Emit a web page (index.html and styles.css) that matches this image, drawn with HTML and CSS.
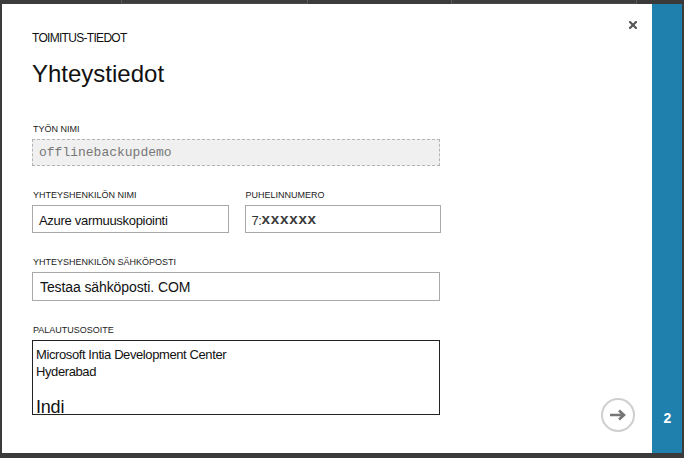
FILE: index.html
```html
<!DOCTYPE html>
<html lang="fi">
<head>
<meta charset="utf-8">
<title>Yhteystiedot</title>
<link rel="stylesheet" href="styles.css">
</head>
<body>
<div class="frame">
  <div class="topbar">
    <div class="seg seg-a"></div>
    <div class="seg seg-b"></div>
    <div class="seg seg-c"></div>
    <div class="seg seg-d"></div>
    <div class="seg seg-e"></div>
  </div>
  <div class="main">
    <div class="dialog">
      <button class="close" aria-label="Sulje">
        <svg width="8" height="8" viewBox="0 0 8 8"><path d="M1 1L7 7M7 1L1 7" stroke="#555" stroke-width="2.2" stroke-linecap="square"/></svg>
      </button>
      <div class="subtitle">TOIMITUS-TIEDOT</div>
      <h1 class="title">Yhteystiedot</h1>

      <div class="field field-first">
        <div class="label">TYÖN NIMI</div>
        <div class="input input-disabled">offlinebackupdemo</div>
      </div>

      <div class="row">
        <div class="field half">
          <div class="label">YHTEYSHENKILÖN NIMI</div>
          <div class="input input-mid">Azure varmuuskopiointi</div>
        </div>
        <div class="field half">
          <div class="label">PUHELINNUMERO</div>
          <div class="input input-mid"><span class="phone-prefix">7:</span><span class="mono">xxxxxx</span></div>
        </div>
      </div>

      <div class="field">
        <div class="label">YHTEYSHENKILÖN SÄHKÖPOSTI</div>
        <div class="input input-large">Testaa sähköposti. COM</div>
      </div>

      <div class="field">
        <div class="label">PALAUTUSOSOITE</div>
        <div class="textarea">
          <div class="addr">Microsoft Intia Development Center</div>
          <div class="addr">Hyderabad</div>
          <div class="addr-big">Indi</div>
        </div>
      </div>

      <button class="next" aria-label="Seuraava">
        <svg width="18" height="12" viewBox="0 0 18 12"><path d="M1 6H15M10 1.5L15 6L10 10.5" fill="none" stroke="#767676" stroke-width="2.6"/></svg>
      </button>
    </div>
    <div class="steps">
      <div class="step-num">2</div>
    </div>
  </div>
</div>
</body>
</html>
```

FILE: styles.css
```css
* { box-sizing: border-box; }
html, body { margin: 0; padding: 0; }
body {
  width: 684px;
  height: 458px;
  background: #3b3b3b;
  font-family: "Liberation Sans", Arial, sans-serif;
  overflow: hidden;
}
.frame {
  display: flex;
  flex-direction: column;
  height: 458px;
  padding: 0 2px 5px 2px;
}
.topbar {
  height: 4px;
  display: flex;
  margin: 0 -2px;
}
.seg { height: 4px; background: #3c3c3c; }
.seg-a { width: 121px; }
.seg-b { width: 187px; border-left: 1px solid #5a5a5a; border-right: 1px solid #5a5a5a; border-bottom: 1px solid #4a4a4a; }
.seg-c { width: 143px; }
.seg-d { width: 186px; border-left: 1px solid #5a5a5a; border-right: 1px solid #5a5a5a; border-bottom: 1px solid #4a4a4a; }
.seg-e { flex: 1; background: #3a3a3a; }
.main {
  flex: 1;
  display: flex;
}
.dialog {
  position: relative;
  width: 650px;
  background: #ffffff;
  padding: 27px 0 0 30px;
  overflow: hidden;
}
.steps {
  width: 30px;
  background: #1f80ae;
  display: flex;
  flex-direction: column;
  justify-content: flex-end;
  align-items: center;
  padding-bottom: 27px;
}
.step-num {
  color: #ffffff;
  font-weight: bold;
  font-size: 14px;
  line-height: 16px;
  margin-left: 1px;
}
.close {
  position: absolute;
  top: 17px;
  right: 15px;
  width: 8px;
  height: 8px;
  padding: 0;
  border: 0;
  background: none;
  display: block;
}
.close svg { display: block; }
.subtitle {
  font-size: 12px;
  line-height: 14px;
  color: #111;
  letter-spacing: -0.7px;
}
.title {
  margin: 15px 0 0 0;
  font-weight: normal;
  font-size: 24px;
  line-height: 28px;
  color: #111;
  letter-spacing: 0;
}
.field { margin-top: 24px; width: 408px; }
.field-first { margin-top: 36px; }
.row { display: flex; gap: 16px; width: 409px; }
.row .field { width: 197px; }
.label {
  font-size: 9px;
  line-height: 11px;
  color: #222;
  letter-spacing: 0;
  margin-bottom: 4px;
  padding-left: 1px;
}
.input {
  border: 1px solid #a9a9a9;
  height: 29px;
  padding: 0 0 0 6px;
  display: flex;
  align-items: center;
  color: #111;
}
.input-disabled {
  height: 27px;
  border: 1px dashed #b4b4b4;
  background: #f0f0f0;
  font-family: "Liberation Mono", "Courier New", monospace;
  font-size: 13px;
  color: #777;
  padding-left: 6px;
}
.input-mid {
  height: 28px;
  font-size: 13px;
  letter-spacing: -0.3px;
  padding-top: 3px;
}
.phone-prefix { font-size: 13px; color: #333; letter-spacing: -0.5px; }
.mono {
  font-family: "Liberation Mono", "Courier New", monospace;
  font-size: 15px;
  font-weight: bold;
  color: #3a3a3a;
  letter-spacing: 0.2px;
}
.input-large {
  font-size: 14px;
  letter-spacing: -0.1px;
  padding-left: 7px;
}
.textarea {
  border: 1px solid #222;
  height: 75px;
  padding: 5px 0 0 3px;
  color: #111;
}
.addr {
  font-size: 13px;
  line-height: 17px;
  letter-spacing: -0.4px;
}
.addr-big {
  margin-top: 19px;
  font-size: 18px;
  line-height: 16px;
  letter-spacing: -0.2px;
}
.next {
  position: absolute;
  left: 599px;
  top: 394px;
  width: 34px;
  height: 34px;
  border: 2px solid #cfcfcf;
  border-radius: 50%;
  background: #fff;
  padding: 0;
  display: flex;
  align-items: center;
  justify-content: center;
}
.next svg { display: block; }
```
